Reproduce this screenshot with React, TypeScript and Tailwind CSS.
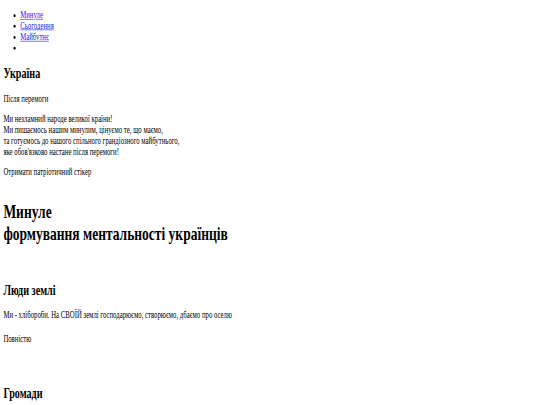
const navItems = ["Минуле", "Сьогодення", "Майбутнє"];

export default function App() {
  return (
    <div className="h-[405px] w-[540px] overflow-hidden bg-white">
      {/* page captured at 1280px wide, squeezed into the frame */}
      <div className="w-[1280px] origin-top-left scale-x-[0.421875] scale-y-[0.592] px-2 py-px font-['Liberation_Serif','Times_New_Roman',serif] text-[16px] leading-[1.15] text-black">
        <nav>
          <ul className="my-4 list-disc pl-10">
            {navItems.map((item) => (
              <li key={item}>
                <a href="#" className="text-[#1a1aee] underline">
                  {item}
                </a>
              </li>
            ))}
            <li></li>
          </ul>
        </nav>

        <header>
          <h2 className="my-[19.92px] text-[24px] font-bold leading-[1.15]">Україна</h2>
          <p className="my-4">Після перемоги</p>
          <p className="my-4">
            Ми незламний народе великої країни!
            <br />
            Ми пишаємось нашим минулим, цінуємо те, що маємо,
            <br />
            та готуємось до нашого спільного грандіозного майбутнього,
            <br />
            яке обов'язково настане після перемоги!
          </p>
          <p className="mt-4">Отримати патріотичний стікер</p>
        </header>

        <section className="mt-[40px]">
          <h1 className="text-[32px] font-bold leading-[1.15]">
            Минуле
            <br />
            формування ментальності українців
          </h1>

          <article className="mt-[63px]">
            <h2 className="text-[24px] font-bold leading-[1.15]">Люди землі</h2>
            <p className="my-[19.92px]">
              Ми - хлібороби. На СВОЇЙ землі господарюємо, створюємо, дбаємо про оселю
            </p>
            <p>Повністю</p>
          </article>

          <article className="mt-[70px]">
            <h2 className="text-[24px] font-bold leading-[1.15]">Громади</h2>
          </article>
        </section>
      </div>
    </div>
  );
}
